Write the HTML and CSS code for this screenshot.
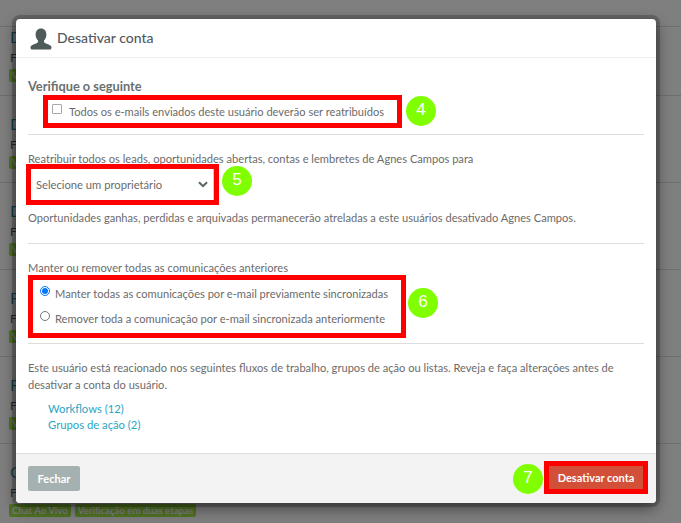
FILE: index.html
```html
<!DOCTYPE html>
<html lang="pt">
<head>
<meta charset="utf-8">
<title>Desativar conta</title>
<link rel="stylesheet" href="styles.css">
</head>
<body>
<main class="list">
  <div class="row"><a class="name">Dalton Reis</a><p class="sub">Função</p><div class="tags"><span class="tag">Verificado</span></div></div>
  <div class="row"><a class="name">Daniela Lima</a><p class="sub">Função</p><div class="tags"><span class="tag">Verificado</span></div></div>
  <div class="row"><a class="name">Diego Alves</a><p class="sub">Função</p><div class="tags"><span class="tag">Verificado</span></div></div>
  <div class="row"><a class="name">Fábio Rocha</a><p class="sub">Função</p><div class="tags"><span class="tag">Verificado</span></div></div>
  <div class="row"><a class="name">Felipe Dias</a><p class="sub">Função</p><div class="tags"><span class="tag">Verificado</span></div></div>
  <div class="row"><a class="name">Gabriel Melo</a><p class="sub">Função</p><div class="tags"><span class="tag">Chat Ao Vivo</span><span class="tag">Verificação em duas etapas</span></div></div>
</main>
<div class="scrim"></div>
<section class="modal">
  <header class="modal-head">
    <svg class="user-icon" viewBox="0 0 22 22" width="22" height="22" aria-hidden="true"><path d="M11 0.5c-3.3 0-5.4 2.6-5.4 6 0 2.3.9 4.5 2.2 5.8.3.4.3 1.100.1 1.600-.5 1-1.600 1.400-3.200 2-1.900.7-3.900 1.500-4.200 3.100-.1.700.3 2.500 1 2.500h19c.7 0 1.100-1.800 1-2.500-.3-1.600-2.300-2.400-4.200-3.100-1.600-.6-2.700-1-3.200-2-.2-.5-.2-1.200.1-1.600 1.300-1.300 2.200-3.500 2.200-5.800 0-3.400-2.100-6-5.400-6z"/></svg>
    <h2 class="modal-title">Desativar conta</h2>
  </header>
  <div class="modal-body">
    <section class="block block-first">
      <h3 class="block-title">Verifique o seguinte</h3>
      <div class="mark mark-check">
        <label class="opt"><input type="checkbox" class="check"><span>Todos os e-mails enviados deste usuário deverão ser reatribuídos</span></label>
        <span class="step step-4">4</span>
      </div>
    </section>
    <section class="block block-owner">
      <p class="text">Reatribuir todos os leads, oportunidades abertas, contas e lembretes de Agnes Campos para</p>
      <div class="mark mark-select">
        <div class="select-box"><span>Selecione um proprietário</span><svg class="chev" viewBox="0 0 10 7" width="10" height="7" aria-hidden="true"><path d="M1 1.200l4 4 4-4" fill="none" stroke="#5a6565" stroke-width="2"/></svg></div>
        <span class="step step-5">5</span>
      </div>
      <p class="text text-after">Oportunidades ganhas, perdidas e arquivadas permanecerão atreladas a este usuários desativado Agnes Campos.</p>
    </section>
    <section class="block block-comm">
      <p class="text">Manter ou remover todas as comunicações anteriores</p>
      <div class="mark mark-radio">
        <label class="opt"><input type="radio" name="comm" class="radio" checked><span>Manter todas as comunicações por e-mail previamente sincronizadas</span></label>
        <label class="opt"><input type="radio" name="comm" class="radio"><span>Remover toda a comunicação por e-mail sincronizada anteriormente</span></label>
        <span class="step step-6">6</span>
      </div>
    </section>
    <section class="block block-last">
      <p class="text text-para">Este usuário está reacionado nos seguintes fluxos de trabalho, grupos de ação ou listas. Reveja e faça alterações antes de desativar a conta do usuário.</p>
      <ul class="links">
        <li><a class="link">Workflows (12)</a></li>
        <li><a class="link">Grupos de ação (2)</a></li>
      </ul>
    </section>
  </div>
  <footer class="modal-foot">
    <button class="btn btn-close" type="button">Fechar</button>
    <div class="mark mark-btn">
      <button class="btn btn-danger" type="button">Desativar conta</button>
      <span class="step step-7">7</span>
    </div>
  </footer>
</section>
</body>
</html>
```
FILE: styles.css
```css
* { box-sizing: border-box; }
html, body { margin: 0; height: 100%; }
body {
  width: 681px;
  height: 523px;
  overflow: hidden;
  background: #fff;
  font-family: Lato, "Open Sans", sans-serif;
  color: #666;
  position: relative;
}
.list { padding-top: 26px; }
.row {
  height: 87px;
  border-top: 1px solid #ddd;
  padding: 18px 0 0 10px;
}
.row:first-child { height: 69px; padding-top: 0; }
.name { display: block; font-size: 16px; line-height: 20px; color: #2a93a8; }
.sub { margin: 3px 0 0; font-size: 12px; line-height: 16px; color: #555; }
.tags { display: flex; gap: 4px; margin: 3px 0 0 -1px; }
.tag {
  background: #a0e646;
  color: #fff;
  font-size: 9.600px;
  font-weight: 700;
  line-height: 11px;
  padding: 1px 3px;
  border-radius: 2px;
}
.scrim { position: absolute; inset: 0; background: rgba(0, 0, 0, .5); }
.modal {
  position: absolute;
  left: 16px;
  top: 19px;
  width: 640px;
  height: 484px;
  background: #fff;
  border-radius: 4px;
  box-shadow: 0 0 0 4px rgba(0, 0, 0, .2), 0 5px 15px rgba(0, 0, 0, .5);
  display: flex;
  flex-direction: column;
}
.modal-head {
  height: 39px;
  flex: none;
  border-bottom: 1px solid #eee;
  display: flex;
  align-items: center;
  padding: 0 0 0 14px;
  gap: 5px;
}
.user-icon { fill: #4f5b5b; flex: none; margin-top: 2px; }
.modal-title { margin: 0; font-size: 14px; font-weight: 500; color: #55595c; line-height: 18px; }
.modal-body { flex: 1; padding: 0 12px; }
.block { border-bottom: 1px solid #ddd; }
.block-first { padding-top: 19px; height: 77px; }
.block-owner { padding-top: 17px; height: 109px; }
.block-comm { padding-top: 17px; height: 100px; }
.block-last { border-bottom: 0; padding-top: 16px; }
.block-title { margin: 0; font-size: 12.800px; font-weight: 700; line-height: 18px; color: #6a7070; }
.text { margin: 0; font-size: 11.120px; line-height: 16px; color: #6b6b6b; position: relative; top: -1px; }
.text-after { margin-top: 5px; top: 0; }
.text-para { line-height: 17px; width: 590px; }
.mark { position: relative; border: 5px solid #f00; }
.mark-check { width: 359px; height: 33px; margin: 0 0 0 15px; display: flex; align-items: center; padding-left: 4px; }
.opt { display: flex; align-items: center; font-size: 11.120px; line-height: 16px; color: #6b6b6b; white-space: nowrap; }
.check { width: 10px; height: 10px; margin: -6px 7px 0 0; appearance: none; border: 1px solid #a8a8a8; border-radius: 1px; background: #fff; }
.mark-select { width: 193px; height: 41px; margin: -4px 0 0 -2px; }
.select-box {
  height: 100%;
  display: flex;
  align-items: center;
  justify-content: space-between;
  padding: 0 0 0 5px;
  font-size: 11.200px;
  color: #6b6b6b;
  border-right: 1px solid #ccd;
}
.chev { margin-right: 5px; }
.mark-radio {
  width: 378px;
  height: 63px;
  margin: -2px 0 0 0;
  display: flex;
  flex-direction: column;
  justify-content: center;
  gap: 9px;
  padding-left: 7px;
}
.radio { width: 10px; height: 10px; margin: -6px 5px 0 0; accent-color: #0075ff; }
.links { list-style: none; margin: 7px 0 0; padding: 0 0 0 20px; font-size: 11.250px; line-height: 16px; }
.link { color: #2aa5c4; }
.modal-foot {
  height: 50px;
  flex: none;
  background: #f3f3f3;
  border-top: 1px solid #ddd;
  border-radius: 0 0 4px 4px;
  display: flex;
  align-items: center;
  justify-content: space-between;
  padding: 0 8px 0 12px;
}
.btn { border: 0; font-family: inherit; font-size: 11px; font-weight: 700; color: #fff; border-radius: 2px; padding: 0; }
.btn-close { width: 52px; height: 25px; background: #a5b0b0; }
.mark-btn { width: 104px; height: 33px; margin-top: -3px; }
.btn-danger { width: 94px; height: 23px; display: block; background: #d35038; border-radius: 0; }
.step {
  position: absolute;
  width: 30px;
  height: 30px;
  border-radius: 50%;
  background: #80ff00;
  color: #fff;
  font-family: "Liberation Sans", Arial, sans-serif;
  font-size: 17px;
  line-height: 28px;
  text-align: center;
}
.step-4 { left: 358px; top: -4px; }
.step-5 { left: 191px; top: -3px; }
.step-6 { left: 375px; top: 8px; }
.step-7 { left: -36px; top: -2px; }
```
